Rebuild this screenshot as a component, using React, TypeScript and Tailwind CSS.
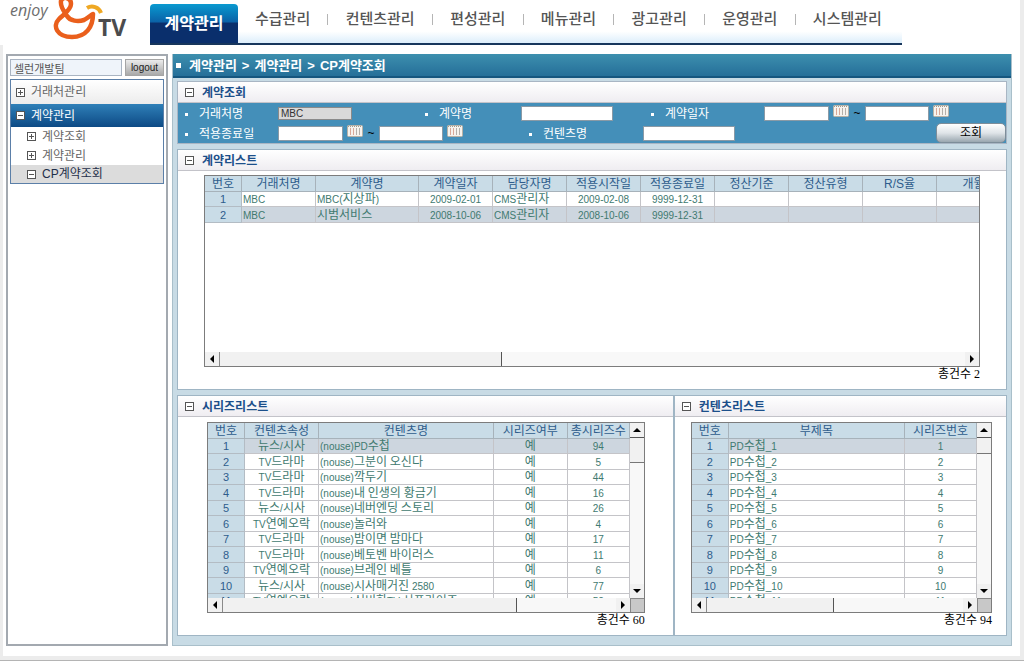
import React from 'react';

/* Latin letters and digits sit smaller than the Hangul beside them. */
function Mixed({ text }: { text: string }) {
  return (
    <>
      {text.split(/([\u3131-\uD79D]+)/).map((part, i) =>
        /[\u3131-\uD79D]/.test(part) ? (
          <span key={i}>{part}</span>
        ) : (
          <span key={i} className="text-[10px] leading-none whitespace-pre">
            {part}
          </span>
        ),
      )}
    </>
  );
}

function ToggleIcon({ open, color = '#555' }: { open: boolean; color?: string }) {
  return (
    <svg width="9" height="9" viewBox="0 0 9 9" className="shrink-0" shapeRendering="crispEdges" aria-hidden="true">
      <rect x="0.5" y="0.5" width="8" height="8" fill="#fff" stroke={color} />
      <path d="M2 4.5H7" stroke={color} />
      {!open && <path d="M4.5 2V7" stroke={color} />}
    </svg>
  );
}

function Calendar({ label }: { label: string }) {
  return (
    <button type="button" aria-label={label} className="mb-1 ml-1 shrink-0">
      <svg width="16" height="12" viewBox="0 0 16 12" className="block" aria-hidden="true">
        <rect x="0.5" y="0.5" width="15" height="11" rx="1" fill="#f6f3ee" stroke="#b9b2a6" />
        <path d="M1 1.5H15" stroke="#a09a90" strokeDasharray="1 1" />
        <path d="M3.5 3V10M6.5 3V10" stroke="#d9a898" />
        <path d="M9.5 3V10M12.5 3V10" stroke="#b4b0aa" />
      </svg>
    </button>
  );
}

function Logo() {
  return (
    <svg width="150" height="45" viewBox="0 0 150 45" className="shrink-0" role="img" aria-label="enjoy &TV">
      <text x="10" y="16" fontSize="16" fontStyle="italic" fill="#6d6d6d" fontFamily="Open Sans, Noto Sans, sans-serif">
        enjoy
      </text>
      <path
        d="M61 1C60 7 64 11 67 16C70 21 78 22 84 20C88 18 91 15 93 14C93 27 86 37 72 37C57 37 52 26 59 19C63 15 71 10 71 4C71 -3 62 -4 61 1"
        fill="none"
        stroke="#ea5f1c"
        strokeWidth="4.500"
        strokeLinecap="round"
        strokeLinejoin="round"
      />
      <path d="M87 8C92 5 99 7 101 13" fill="none" stroke="#efa824" strokeWidth="4" />
      <text x="98" y="36" fontSize="23" fontWeight="700" fill="#4b4b4d" fontFamily="Open Sans, Noto Sans, sans-serif">
        TV
      </text>
    </svg>
  );
}

const NAV = ['수급관리', '컨텐츠관리', '편성관리', '메뉴관리', '광고관리', '운영관리', '시스템관리'];

function Header() {
  return (
    <header className="flex h-[45px] items-end bg-white">
      <Logo />
      <nav className="flex h-[41px] w-[752px] items-start border-b-2 border-[#17365c] bg-linear-to-b from-white from-70% to-[#dceefb]">
        <a
          href="#contract"
          className="flex h-[39px] w-[88px] shrink-0 items-center justify-center rounded-t-[4px] bg-linear-to-b from-[#0a9ad0] from-0% via-[#0b63a8] via-45% to-[#0a2f6c] to-50% text-[16px] font-bold text-white"
        >
          계약관리
        </a>
        <ul className="flex flex-1 items-center justify-between pt-1 pr-5 pl-[17px] text-[15px] leading-[22px] font-medium text-[#555]">
          {NAV.map((item, i) => (
            <React.Fragment key={item}>
              {i > 0 && <li aria-hidden="true" className="h-[11px] w-px bg-[#b5b5b5]" />}
              <li>
                <a href="#nav">{item}</a>
              </li>
            </React.Fragment>
          ))}
        </ul>
      </nav>
    </header>
  );
}

function SubItem({ label, open = false }: { label: string; open?: boolean }) {
  return (
    <a
      href="#sub"
      className={
        open
          ? 'flex h-[18px] items-center gap-[6px] bg-[#dcdcdc] pl-4 text-[#1f2f4a]'
          : 'flex h-[19px] items-center gap-[6px] bg-white pl-4 text-[#666]'
      }
    >
      <ToggleIcon open={open} />
      {label}
    </a>
  );
}

function Sidebar() {
  return (
    <aside className="w-[162px] shrink-0 border-2 border-[#a3a9b0] bg-white px-[2px] pt-[3px]">
      <div className="flex items-center gap-[3px]">
        <input
          aria-label="사용자"
          readOnly
          value="셀런개발팀"
          className="h-[17px] min-w-0 flex-1 border border-[#a9b4c2] bg-[#eff4fa] px-[3px] text-[11px] text-[#555]"
        />
        <button
          type="button"
          className="h-[17px] w-[39px] border border-[#a5a5a5] bg-linear-to-b from-[#ececec] to-[#a9a9a9] text-[10px] leading-[15px] text-[#222]"
        >
          logout
        </button>
      </div>
      <nav className="mt-[3px] border border-[#5b7fa8] text-[12px] leading-[18px]">
        <a
          href="#partner"
          className="flex h-[24px] items-center gap-[6px] bg-linear-to-b from-white to-[#ececec] pl-[5px] text-[#666]"
        >
          <ToggleIcon open={false} />
          거래처관리
        </a>
        <a
          href="#contract"
          className="flex h-[23px] items-center gap-[6px] bg-linear-to-b from-[#2f80b8] to-[#0d4a85] pl-[5px] text-white"
        >
          <ToggleIcon open />
          계약관리
        </a>
        <SubItem label="계약조회" />
        <SubItem label="계약관리" />
        <SubItem label="CP계약조회" open />
      </nav>
    </aside>
  );
}

function SectionTitle({ children }: { children: string }) {
  return (
    <h2 className="flex h-[21px] items-center gap-2 border-b border-[#c3c3c9] bg-linear-to-b from-white to-[#efedf1] pt-px pl-[7px] text-[12px] leading-[20px] font-bold text-[#1c4f8a]">
      <ToggleIcon open />
      {children}
    </h2>
  );
}

function FieldLabel({ id, text }: { id: string; text: string }) {
  return (
    <label htmlFor={id} className="flex items-center gap-[11px] pt-[2px] pl-[7px] text-[12px] leading-[16px] text-white">
      <span className="size-[3px] bg-white" />
      {text}
    </label>
  );
}

const FIELD = 'h-[15px] shrink-0 border border-[#8a9aa6] bg-white px-[2px] text-[10px] leading-[12px] text-[#333]';

function DateRange({ id, label }: { id: string; label: string }) {
  return (
    <div className="flex items-center">
      <input id={id} className={FIELD + ' w-[65px]'} />
      <Calendar label={label + ' 시작'} />
      <span className="w-[16px] shrink-0 text-center text-[12px] leading-[14px] text-black">~</span>
      <input aria-label={label + ' 종료'} className={FIELD + ' w-[64px]'} />
      <Calendar label={label + ' 종료'} />
    </div>
  );
}

function Filter() {
  return (
    <section className="border border-[#a9b6c4]">
      <SectionTitle>계약조회</SectionTitle>
      <form className="bg-[#448fb9]">
        <div className="grid h-[20px] grid-cols-[100px_140px_103px_123px_120px_1fr] items-center">
          <FieldLabel id="partner" text="거래처명" />
          <input
            id="partner"
            defaultValue="MBC"
            className="h-[13px] w-[74px] border border-[#8a8a8a] bg-[#d9d9d9] px-[2px] text-[10px] leading-[11px] text-[#333]"
          />
          <FieldLabel id="contract-name" text="계약명" />
          <input id="contract-name" className={FIELD + ' w-[92px]'} />
          <FieldLabel id="contract-date" text="계약일자" />
          <DateRange id="contract-date" label="계약일자" />
        </div>
        <div className="grid h-[20px] grid-cols-[100px_244px_121px_1fr_auto] items-center">
          <FieldLabel id="end-date" text="적용종료일" />
          <DateRange id="end-date" label="적용종료일" />
          <FieldLabel id="content-name" text="컨텐츠명" />
          <input id="content-name" className={FIELD + ' w-[92px]'} />
          <button
            type="button"
            className="h-[20px] w-[70px] rounded-[5px] border border-[#7d8d99] bg-linear-to-b from-white via-[#dfe4e8] to-[#9aa7b0] text-[12px] leading-[18px] text-black"
          >
            조회
          </button>
        </div>
      </form>
    </section>
  );
}

interface Column {
  title: string;
  width: string;
  left?: boolean;
}

function Grid({
  columns,
  rows,
  selected,
  tableWidth,
  label,
}: {
  columns: Column[];
  rows: string[][];
  selected: number;
  tableWidth: string;
  label: string;
}) {
  return (
    <table aria-label={label} className={'table-fixed border-separate border-spacing-0 text-[12px] ' + tableWidth}>
      <colgroup>
        {columns.map((c) => (
          <col key={c.title} className={c.width} />
        ))}
      </colgroup>
      <thead>
        <tr className="h-[16px]">
          {columns.map((c) => (
            <th
              key={c.title}
              className="h-[16px] overflow-hidden border-r border-b border-[#a7b2ba] bg-[#c9dce7] p-0 pt-px text-center leading-[14px] font-normal whitespace-nowrap text-[#2e5c8c]"
            >
              {c.title}
            </th>
          ))}
        </tr>
      </thead>
      <tbody>
        {rows.map((row, r) => (
          <tr key={r} className={r === selected ? 'h-[15px] bg-[#cdd6df] even:h-[16px]' : 'h-[15px] even:h-[16px]'}>
            {row.map((cell, i) => (
              <td
                key={i}
                className={
                  i === 0
                    ? 'overflow-hidden border-r border-b border-[#b3bcc4] bg-[#c9dce7] p-0 text-center text-[11px] leading-[14px] text-[#2e5c8c]'
                    : columns[i].left
                      ? 'overflow-hidden border-r border-b border-[#c4c4c8] p-0 pl-px text-left leading-[14px] whitespace-nowrap text-[#417a70]'
                      : 'overflow-hidden border-r border-b border-[#c4c4c8] p-0 text-center leading-[14px] whitespace-nowrap text-[#417a70]'
                }
              >
                {i === 0 ? cell : <Mixed text={cell} />}
              </td>
            ))}
          </tr>
        ))}
      </tbody>
    </table>
  );
}

function Arrow({ d, label }: { d: string; label: string }) {
  return (
    <button type="button" aria-label={label} className="flex size-[14px] shrink-0 items-center justify-center bg-[#f1f1f1]">
      <svg width="8" height="8" viewBox="0 0 8 8" aria-hidden="true">
        <path d={d} fill="#000" />
      </svg>
    </button>
  );
}

function HScroll({ thumb }: { thumb: string }) {
  return (
    <div className="flex h-[14px] min-w-0 flex-1 bg-[#f8f8f8]">
      <Arrow d="M6 0V8L2 4Z" label="왼쪽으로" />
      <div className="flex flex-1">
        <div className={'border-x border-r-[#555] border-l-[#8a8a8a] bg-[#f1f1f1] ' + thumb} />
      </div>
      <Arrow d="M2 0V8L6 4Z" label="오른쪽으로" />
    </div>
  );
}

function VScroll({ thumb }: { thumb: string }) {
  return (
    <div className="flex w-[14px] shrink-0 flex-col bg-[#f8f8f8]">
      <Arrow d="M0 6H8L4 2Z" label="위로" />
      <div className="flex-1">
        <div className={'border-t border-b border-t-[#555] border-b-[#777] bg-[#f1f1f1] ' + thumb} />
      </div>
      <Arrow d="M0 2H8L4 6Z" label="아래로" />
    </div>
  );
}

function Total({ count }: { count: number }) {
  return (
    <p className="text-right font-['Liberation_Serif','Noto_Sans_CJK_KR',serif] text-[12px] leading-[14px] text-black">
      총건수 {count}
    </p>
  );
}

const CONTRACT_COLUMNS: Column[] = [
  { title: '번호', width: 'w-[37px]' },
  { title: '거래처명', width: 'w-[74px]', left: true },
  { title: '계약명', width: 'w-[103px]', left: true },
  { title: '계약일자', width: 'w-[74px]' },
  { title: '담당자명', width: 'w-[74px]', left: true },
  { title: '적용시작일', width: 'w-[74px]' },
  { title: '적용종료일', width: 'w-[74px]' },
  { title: '정산기준', width: 'w-[74px]' },
  { title: '정산유형', width: 'w-[74px]' },
  { title: 'R/S율', width: 'w-[74px]' },
  { title: '개월', width: 'w-[74px]' },
];

const CONTRACTS = [
  ['1', 'MBC', 'MBC(지상파)', '2009-02-01', 'CMS관리자', '2009-02-08', '9999-12-31', '', '', '', ''],
  ['2', 'MBC', '시범서비스', '2008-10-06', 'CMS관리자', '2008-10-06', '9999-12-31', '', '', '', ''],
];

const SERIES_COLUMNS: Column[] = [
  { title: '번호', width: 'w-[37px]' },
  { title: '컨텐츠속성', width: 'w-[74px]' },
  { title: '컨텐츠명', width: 'w-auto', left: true },
  { title: '시리즈여부', width: 'w-[74px]' },
  { title: '총시리즈수', width: 'w-[62px]' },
];

const SERIES = [
  ['1', '뉴스/시사', '(nouse)PD수첩', '예', '94'],
  ['2', 'TV드라마', '(nouse)그분이 오신다', '예', '5'],
  ['3', 'TV드라마', '(nouse)깍두기', '예', '44'],
  ['4', 'TV드라마', '(nouse)내 인생의 황금기', '예', '16'],
  ['5', '뉴스/시사', '(nouse)네버엔딩 스토리', '예', '26'],
  ['6', 'TV연예오락', '(nouse)놀러와', '예', '4'],
  ['7', 'TV드라마', '(nouse)밤이면 밤마다', '예', '17'],
  ['8', 'TV드라마', '(nouse)베토벤 바이러스', '예', '11'],
  ['9', 'TV연예오락', '(nouse)브레인 베틀', '예', '6'],
  ['10', '뉴스/시사', '(nouse)시사매거진 2580', '예', '77'],
  ['11', 'TV연예오락', '(nouse)신비한TV 서프라이즈', '예', '52'],
];

const EPISODE_COLUMNS: Column[] = [
  { title: '번호', width: 'w-[37px]' },
  { title: '부제목', width: 'w-auto', left: true },
  { title: '시리즈번호', width: 'w-[72px]' },
];

const EPISODES = Array.from({ length: 11 }, (_, i) => [String(i + 1), 'PD수첩_' + (i + 1), String(i + 1)]);

function ScrollPane({ children, hThumb, vThumb }: { children: React.ReactNode; hThumb: string; vThumb: string }) {
  return (
    <div className="border border-[#7c7c7c]">
      <div className="flex h-[175px]">
        <div className="min-w-0 flex-1 overflow-hidden">{children}</div>
        <VScroll thumb={vThumb} />
      </div>
      <div className="flex">
        <HScroll thumb={hThumb} />
        <div className="size-[14px] shrink-0 border-t border-l border-[#888] bg-[#c8c8c8]" />
      </div>
    </div>
  );
}

export default function App() {
  return (
    <div className="min-h-screen bg-[#ececec] font-['Liberation_Sans','Noto_Sans_CJK_KR',sans-serif]">
      <div className="mr-1 bg-white">
        <Header />
      </div>
      <div className="mr-1 ml-[3px] flex gap-1 bg-white pt-[9px] pr-2 pb-[10px] pl-[3px]">
        <Sidebar />
        <main className="flex min-w-0 flex-1 flex-col border border-t-0 border-[#a9bfca] bg-[#c8dbe5]">
          <h1 className="flex h-[24px] items-center gap-2 border-b-2 border-[#15567f] bg-linear-to-b from-[#3d8fae] to-[#256f99] pt-px pl-[3px] text-[13px] leading-[20px] font-bold text-white">
            <span className="size-[5px] bg-white" />
            <span className="flex gap-[5px]">
              <span>계약관리</span>
              <span>&gt;</span>
              <span>계약관리</span>
              <span>&gt;</span>
              <span>CP계약조회</span>
            </span>
          </h1>
          <div className="flex flex-col gap-[5px] px-1 pt-[3px] pb-[9px]">
            <Filter />
            <section className="h-[241px] border border-[#9fb5c4] bg-white">
              <SectionTitle>계약리스트</SectionTitle>
              <div className="pt-[4px] pr-[26px] pl-[26px]">
                <div className="border border-[#7c7c7c]">
                  <div className="h-[176px] overflow-hidden">
                    <Grid
                      label="계약리스트"
                      columns={CONTRACT_COLUMNS}
                      rows={CONTRACTS}
                      selected={1}
                      tableWidth="w-[806px]"
                    />
                  </div>
                  <HScroll thumb="w-[38%]" />
                </div>
                <Total count={2} />
              </div>
            </section>
            <div className="grid h-[241px] grid-cols-[3fr_2fr] border border-[#9fb5c4] bg-white">
              <section className="min-w-0 border-r-2 border-[#9fb5c4]">
                <SectionTitle>시리즈리스트</SectionTitle>
                <div className="pt-[5px] pr-[28px] pl-[29px]">
                  <ScrollPane hThumb="w-[75%]" vThumb="h-[26px]">
                    <Grid
                      label="시리즈리스트"
                      columns={SERIES_COLUMNS}
                      rows={SERIES}
                      selected={0}
                      tableWidth="w-full"
                    />
                  </ScrollPane>
                  <Total count={60} />
                </div>
              </section>
              <section className="min-w-0">
                <SectionTitle>컨텐츠리스트</SectionTitle>
                <div className="pt-[5px] pr-[14px] pl-[16px]">
                  <ScrollPane hThumb="w-[50%]" vThumb="h-[17px]">
                    <Grid
                      label="컨텐츠리스트"
                      columns={EPISODE_COLUMNS}
                      rows={EPISODES}
                      selected={0}
                      tableWidth="w-full"
                    />
                  </ScrollPane>
                  <Total count={94} />
                </div>
              </section>
            </div>
          </div>
        </main>
      </div>
      <footer className="mt-1 h-[2px] border-t border-[#b4b4b4] bg-white" />
    </div>
  );
}
